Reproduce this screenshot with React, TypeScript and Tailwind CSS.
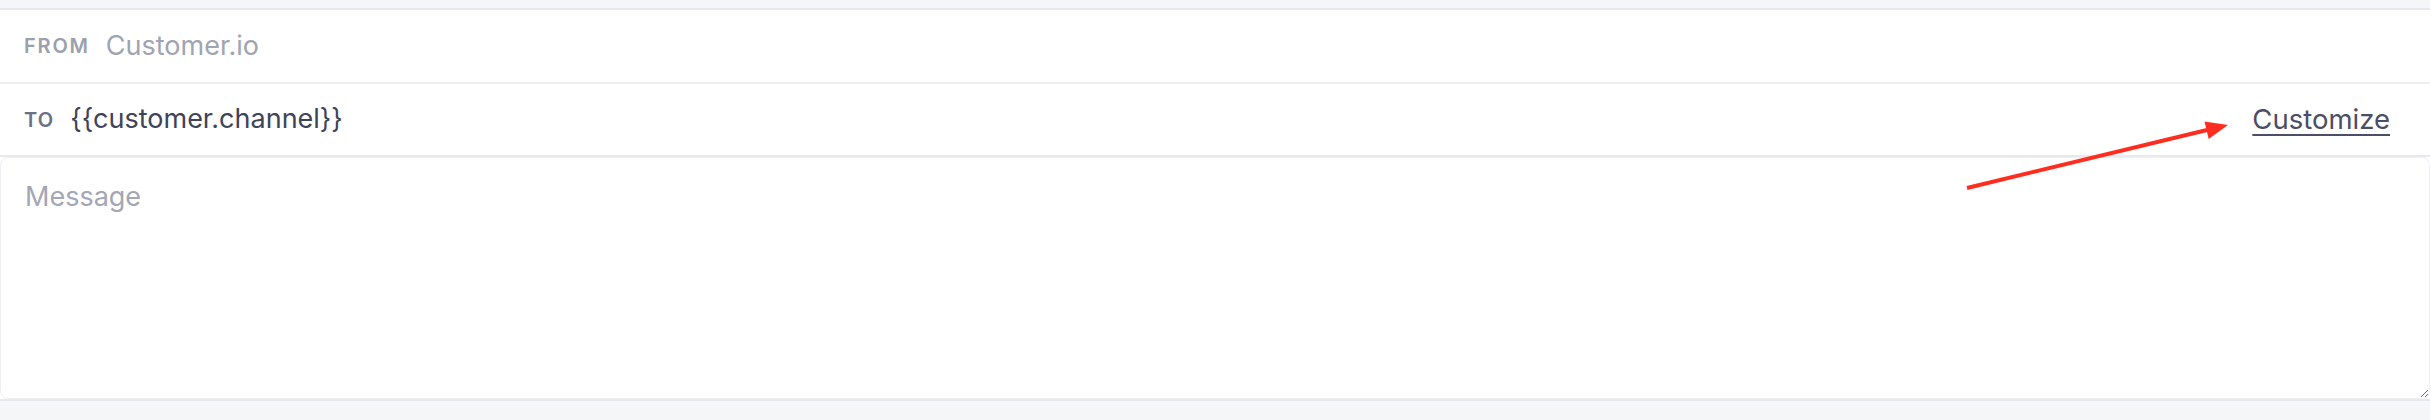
export default function App() {
  return (
    <div
      className="relative h-[420px] w-full bg-[#f5f6f8] pt-[8px]"
      style={{ fontFamily: "Inter, 'Noto Sans', sans-serif" }}
    >
      <div className="border-t-2 border-b-2 border-[#e8e9ee] bg-white">
        {/* from row */}
        <div className="flex h-[74px] items-center border-b-2 border-[#eeeff3] pl-6">
          <span className="text-[20px] font-semibold uppercase tracking-[0.09em] text-[#9c9fac]">
            From
          </span>
          <span className="ml-4 text-[27px] text-[#a0a3b2]">Customer.io</span>
        </div>

        {/* to row */}
        <div className="flex h-[73px] items-center border-b-2 border-[#e8e9ee] pl-6 pr-[40px]">
          <span className="text-[20px] font-semibold uppercase tracking-[0.06em] text-[#6c7086]">
            To
          </span>
          <span className="ml-4 text-[27px] text-[#3f4358]">
            {"{{customer.channel}}"}
          </span>
          <a
            href="#"
            className="ml-auto text-[27.5px] text-[#4b4e64] underline decoration-[2px] underline-offset-[5px]"
          >
            Customize
          </a>
        </div>

        <textarea
          placeholder="Message"
          className="block h-[242px] w-full rounded-[8px] border border-[#eef0f3] bg-white px-[24px] pt-[19px] text-[27px] leading-[40px] text-[#3f4358] outline-none placeholder:text-[#a4a6b5]"
        />
      </div>

      {/* annotation arrow */}
      <svg
        className="pointer-events-none absolute left-[1960px] top-[110px]"
        width="280"
        height="90"
        viewBox="0 0 280 90"
      >
        <line x1="7" y1="78" x2="247" y2="20" stroke="#ff2d1f" strokeWidth="4" />
        <polygon points="268,15 244.5,11.5 248.7,28.9" fill="#ff2d1f" />
      </svg>
    </div>
  );
}
